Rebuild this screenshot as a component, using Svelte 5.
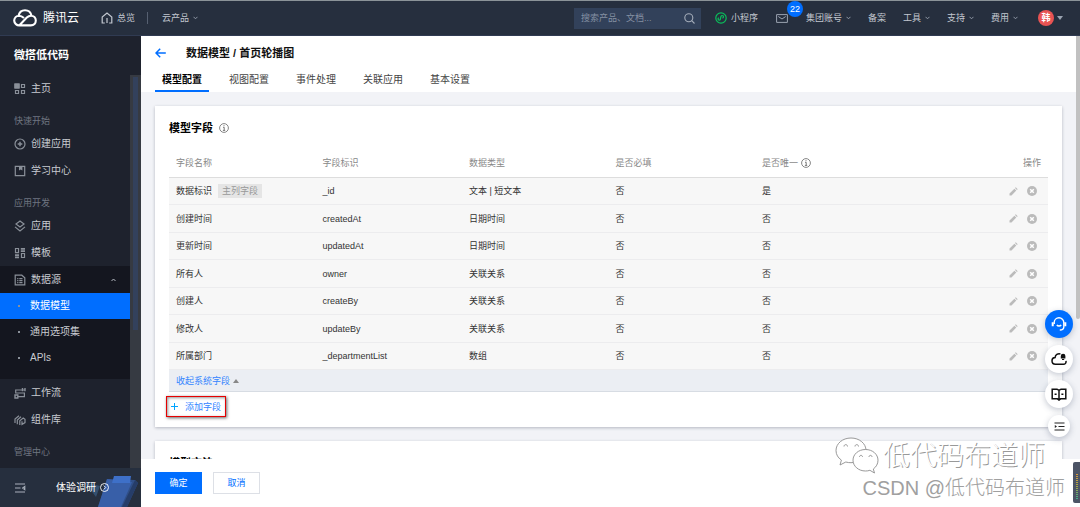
<script lang="ts">
    interface Field {
        name: string;
        key: string;
        type: string;
        required: string;
        unique: string;
        primary?: boolean;
    }

    const tabs = ['模型配置', '视图配置', '事件处理', '关联应用', '基本设置'];
    const submenu = ['数据模型', '通用选项集', 'APIs'];
    const links = [
        { label: '备案', menu: false },
        { label: '工具', menu: true },
        { label: '支持', menu: true },
        { label: '费用', menu: true }
    ];
    const fields: Field[] = [
        { name: '数据标识', key: '_id', type: '文本 | 短文本', required: '否', unique: '是', primary: true },
        { name: '创建时间', key: 'createdAt', type: '日期时间', required: '否', unique: '否' },
        { name: '更新时间', key: 'updatedAt', type: '日期时间', required: '否', unique: '否' },
        { name: '所有人', key: 'owner', type: '关联关系', required: '否', unique: '否' },
        { name: '创建人', key: 'createBy', type: '关联关系', required: '否', unique: '否' },
        { name: '修改人', key: 'updateBy', type: '关联关系', required: '否', unique: '否' },
        { name: '所属部门', key: '_departmentList', type: '数组', required: '否', unique: '否' }
    ];

    let activeTab = $state('模型配置');
    let activeItem = $state('数据模型');
    let open = $state(true);
    let keyword = $state('');
</script>

{#snippet caret()}
    <svg class="caret" width="5" height="4" viewBox="0 0 5 4"><path d="M.5 .8 2.5 2.8 4.5 .8" fill="none" stroke="currentColor" stroke-width=".9"/></svg>
{/snippet}

{#snippet info()}
    <svg width="10" height="10" viewBox="0 0 10 10" fill="none" stroke="currentColor"><circle cx="5" cy="5" r="4.4" stroke-width=".9"/><path d="M4 4.3h1.2v3M3.9 7.4h2.3M4.5 2.7h1"/></svg>
{/snippet}

{#snippet item(label: string, icon: string)}
    <a class="item" href="#{icon}">
        <svg width="12" height="12" viewBox="0 0 12 12" fill="none" stroke="currentColor" stroke-width="1.2">
            {#if icon === 'home'}
                <path d="M1 1h4v4H1zM7.5 7.5h3v3h-3zM1.5 7.5h3v3h-3zM7.5 1.5h3v3h-3z"/><path d="M1 1h4v4H1z" fill="currentColor"/>
            {:else if icon === 'create'}
                <circle cx="6" cy="6" r="5"/><path d="M6 3.7v4.6M3.7 6h4.6" stroke-width="1.5"/>
            {:else if icon === 'learn'}
                <path d="M1.3 1.3h9.4v9.4H1.3z"/><path d="M5 1.5h3.4v4L6.7 4.4 5 5.5z" fill="currentColor" stroke="none"/>
            {:else if icon === 'apps'}
                <path d="M6 .9 10 3.9 6 6.9 2 3.9zM1 6.9l5 4 5-4"/>
            {:else if icon === 'template'}
                <path d="M1.5 1.5h3v4.2h-3zM7.5 6.5h3v4h-3z"/><path d="M6.8 1.9H11M6.8 4.1H11M1 8.2h4M1 10.4h4" stroke-width="1.7"/>
            {:else if icon === 'flow'}
                <path d="M11 3H1.7v3h8.7v3.6H4"/><path d="M8.5 1v3.2M11 1v3.2M1 8h2.8v3H1z" stroke-width="1.4"/>
            {:else if icon === 'parts'}
                <path d="M1 9V5l4-3.2M3.3 10.3V6L7 2.8M5.8 11V6.7L9.2 4 11 5.4v3.2L8 10.5V7.3"/>
            {:else}
                <path d="M6 1.2 10.5 3v3.4L6 10.8 1.5 6.4V3z"/>
            {/if}
        </svg>
        <span>{label}</span>
    </a>
{/snippet}

<div class="app">
    <header class="topbar">
        <a class="brand" href="#top">
            <svg width="24" height="18" viewBox="0 0 24 18" fill="none" stroke="#fff" stroke-width="2.1" stroke-linejoin="round"><path d="M6.6 16.4A5 5 0 0 1 1.2 11.6 5 5 0 0 1 6 6.7c2 0 3.3.8 5 2.4M5.6 6.8C6.2 3.3 8.6 1.2 12 1.2c3.3 0 5.8 2.1 6.4 5.2M6.2 16.4h11.6c3.2 0 5-2.2 5-4.8 0-2.8-2.1-4.9-4.8-4.9-1.6 0-2.9.6-4.2 1.9L6.2 16.4"/></svg>
            <span>腾讯云</span>
        </a>
        <a class="nav overview" href="#overview">
            <svg width="12" height="12" viewBox="0 0 12 12" fill="none" stroke="currentColor" stroke-width="1.2"><path d="M3.8 11H1.2V5L6 1l4.8 4v6H8.2M6 6v5"/></svg>
            总览
        </a>
        <i class="divider"></i>
        <a class="nav" href="#products">云产品 {@render caret()}</a>
        <div class="tools">
            <label class="search">
                <input type="text" placeholder="搜索产品、文档..." aria-label="搜索" bind:value={keyword}/>
                <svg width="11" height="11" viewBox="0 0 11 11" fill="none" stroke="#a5adba" stroke-width="1.1"><circle cx="4.8" cy="4.8" r="4"/><path d="m7.7 7.7 2.8 2.8"/></svg>
            </label>
            <a class="nav mini" href="#mini">
                <svg width="12" height="12" viewBox="0 0 12 12" fill="none" stroke="#0abf5b" stroke-width="1.2"><circle cx="6" cy="6" r="5.2"/><path d="M3.9 6.2a1.2 1.2 0 1 0 1.7 1.5V4.4a1.3 1.3 0 1 1 1.8 1.4" transform="rotate(12 6 6)"/></svg>
                小程序
            </a>
            <a class="mail" href="#mail" aria-label="消息">
                <svg width="12" height="9" viewBox="0 0 12 9" fill="none" stroke="currentColor"><path d="M.6.6h10.8v7.8H.6zM2.3 2.5 6 5l3.7-2.5"/></svg>
                <span class="badge">22</span>
            </a>
            <a class="nav account" href="#account">集团账号 {@render caret()}</a>
            {#each links as link}
                <a class="nav link" href="#{link.label}">{link.label}{#if link.menu}{@render caret()}{/if}</a>
            {/each}
            <button class="user"><span class="avatar">韩</span><i class="down"></i></button>
        </div>
    </header>

    <div class="body">
        <aside class="sidebar">
            <h1>微搭低代码</h1>
            <div class="menu">
                <nav>
                    {@render item('主页', 'home')}
                    <p>快速开始</p>
                    {@render item('创建应用', 'create')}
                    {@render item('学习中心', 'learn')}
                    <p>应用开发</p>
                    {@render item('应用', 'apps')}
                    {@render item('模板', 'template')}
                    <div class="group">
                        <button class="item" onclick={() => {open = !open;}}>
                            <svg width="12" height="12" viewBox="0 0 12 12" fill="none" stroke="currentColor" stroke-width="1.2"><path d="M1.2 1.2h6.6l3 2.6v7H1.2zM3.2 4.7h1.2M5.3 4.7h3.2M3.2 6.7h1.2M5.3 6.7h3.2M3.2 8.7h1.2M5.3 8.7h3.2"/></svg>
                            <span>数据源</span>
                            <svg class="up" width="5" height="4" viewBox="0 0 5 4"><path d="M.5 3 2.5 1 4.5 3" fill="none" stroke="currentColor"/></svg>
                        </button>
                        {#if open}
                            {#each submenu as label}
                                <a class={activeItem === label ? "sub active" : "sub"} href="#{label}" onclick={() => {activeItem = label;}}><i></i>{label}</a>
                            {/each}
                        {/if}
                    </div>
                    {@render item('工作流', 'flow')}
                    {@render item('组件库', 'parts')}
                    <p>管理中心</p>
                    {@render item('权限管理', 'auth')}
                </nav>
                <div class="track"><i></i></div>
            </div>
            <div class="survey">
                <svg class="art" width="58" height="38" viewBox="0 0 58 38">
                    <path d="M2 13 19 17 15 28 9 20z" fill="#34506f"/>
                    <path d="M26 10 54 11 57 14 46 38H17z" fill="#304f88"/>
                    <path d="M26 10 51 13 40 38H17z" fill="#385fa8"/>
                    <path d="M33 7h17l-1 7H31z" fill="#3e70c8"/>
                    <path d="M54 11 57 14 46 38h-5z" fill="#263d69"/>
                </svg>
                <svg width="12" height="10" viewBox="0 0 12 10" fill="none" stroke="#a9b0bb" stroke-width="1.1"><path d="M1 1h10M1 5h5.5M1 9h10M10.8 3.4 8.6 5l2.2 1.6z"/></svg>
                <a href="#survey">体验调研
                    <svg width="9" height="9" viewBox="0 0 9 9" fill="none" stroke="currentColor" stroke-width=".9"><circle cx="4.5" cy="4.5" r="4"/><path d="M3.8 2.6 5.7 4.5 3.8 6.4"/></svg>
                </a>
            </div>
        </aside>

        <main>
            <div class="head">
                <div class="title">
                    <a href="#back" aria-label="返回"><svg width="11" height="10" viewBox="0 0 11 10" fill="none" stroke="#006eff" stroke-width="1.5"><path d="M5.2.7 1 5l4.2 4.3M1 5h9.8"/></svg></a>
                    <h2>数据模型 / 首页轮播图</h2>
                </div>
                <div class="tabs">
                    {#each tabs as tab}
                        <button class={activeTab === tab ? "active" : ""} onclick={() => {activeTab = tab;}}>{tab}</button>
                    {/each}
                </div>
            </div>

            <div class="content">
                <section class="card">
                    <h3>模型字段 {@render info()}</h3>
                    <table>
                        <thead>
                            <tr>
                                <th>字段名称</th>
                                <th>字段标识</th>
                                <th>数据类型</th>
                                <th>是否必填</th>
                                <th><span class="with-icon">是否唯一 {@render info()}</span></th>
                                <th>操作</th>
                            </tr>
                        </thead>
                        <tbody>
                            {#each fields as field}
                                <tr>
                                    <td>{field.name}{#if field.primary}<span class="tag">主列字段</span>{/if}</td>
                                    <td>{field.key}</td>
                                    <td>{field.type}</td>
                                    <td>{field.required}</td>
                                    <td>{field.unique}</td>
                                    <td>
                                        <div class="actions">
                                            <button disabled aria-label="编辑"><svg width="9" height="9" viewBox="0 0 9 9" fill="#bbb"><path d="M.5 8.5v-2L5.4 1.7l1.9 1.9-4.8 4.9zM6 1.1 6.8.3 8.7 2.2 7.9 3z"/></svg></button>
                                            <button disabled aria-label="删除"><svg width="10" height="10" viewBox="0 0 10 10"><circle cx="5" cy="5" r="5" fill="#bbb"/><path d="m3.2 3.2 3.6 3.6M6.8 3.2 3.2 6.8" stroke="#fff" stroke-width="1.5"/></svg></button>
                                        </div>
                                    </td>
                                </tr>
                            {/each}
                        </tbody>
                    </table>
                    <button class="collapse">收起系统字段 <i></i></button>
                    <button class="add">
                        <svg width="7" height="7" viewBox="0 0 7 7" stroke="#00a4ff"><path d="M3.5 0v7M0 3.5h7"/></svg>
                        添加字段
                    </button>
                </section>
                <section class="card">
                    <h3>模型方法</h3>
                </section>
            </div>

            <div class="footer">
                <button class="primary">确定</button>
                <button>取消</button>
            </div>
            <div class="scrollbar"><i></i></div>
        </main>
    </div>

    <div class="floats">
        <button class="service" aria-label="客服"><svg width="16" height="16" viewBox="0 0 16 16" fill="none" stroke="#fff" stroke-width="1.4"><path d="M3.2 8V6.6a4.8 4.8 0 0 1 9.6 0V11c0 1.8-1.6 3-4 3M5.8 9c1.1 1.3 3.3 1.3 4.4 0"/><path d="M1.7 6.3v4M14.3 6.3v4" stroke-width="2"/></svg></button>
        <button aria-label="云助手"><svg width="16" height="14" viewBox="0 0 16 14" fill="none" stroke="#111" stroke-width="1.5"><path d="M9.4 2C6.8 1.3 4.3 2.8 4.1 5.5 2 5.6 1 7.2 1 8.8c0 2 1.3 3.5 3.4 3.5h7.9c2 0 3-1.4 2.7-3.4"/><path d="M9.8 6.5V4a2.3 2.3 0 0 1 4.6 0v2.5z" fill="#111" stroke="none"/><path d="M11 7.5h2.2" stroke-width="1"/></svg></button>
        <button aria-label="文档"><svg width="16" height="13" viewBox="0 0 16 13" fill="none" stroke="#111" stroke-width="1.5"><path d="M1.2 1.2H6L8 2.4l2-1.2h4.8v9.6H9.6L8 12l-1.6-1.2H1.2zM8 2.4V12M3.6 6.2h2M10.4 6.2h2"/></svg></button>
        <button class="small" aria-label="收起"><svg width="11" height="9" viewBox="0 0 11 9" fill="none" stroke="#222" stroke-width="1.2"><path d="M.5 1h10M4.5 4.5h6M.5 8h10"/><path d="M.8 3v3l2.2-1.5z" fill="#222" stroke="none"/></svg></button>
    </div>

    <div class="meter"><i></i></div>

    <div class="watermark">
        <div class="account-name">
            <svg width="44" height="38" viewBox="0 0 44 38" fill="#fff" stroke="#8d8d8d" stroke-width=".9">
                <path d="M16 1C7.6 1 1 6.500 1 13.500c0 4 2 7.300 5.400 9.600L5 28l5.800-3c1.700.5 3.400.7 5.200.7 8.300 0 15-5.600 15-12.300C31 6.500 24.300 1 16 1z"/>
                <path d="M30.500 12.500C23.400 12.500 18 17.300 18 23.200S23.400 34 30.500 34c1.500 0 3-.2 4.400-.7l4.600 2.700-1.200-4c2.900-2 4.700-5.200 4.700-8.800 0-5.900-5.400-10.700-12.500-10.700z"/>
                <path d="M9 9.500c0-2.500 3.500-2.500 3.500 0M20 9.500c0-2.500 3.500-2.500 3.500 0M24.500 20c0-2.200 3-2.200 3 0M34 20c0-2.200 3-2.200 3 0" fill="none"/>
            </svg>
            低代码布道师
        </div>
        <div class="csdn">CSDN @低代码布道师</div>
    </div>
</div>

<style>
    :global(body) {
        margin: 0;
    }
    .app {
        position: relative;
        display: flex;
        flex-direction: column;
        height: 100vh;
        overflow: hidden;
        font-family: "Liberation Sans", "Noto Sans CJK SC", sans-serif;
        font-size: 9px;
        line-height: 14px;
        color: #222;
    }
    .app * {
        box-sizing: border-box;
    }
    svg {
        display: block;
        flex: none;
    }
    a {
        color: inherit;
        text-decoration: none;
    }
    button, input {
        font: inherit;
        color: inherit;
        background: none;
        border: 0;
        padding: 0;
    }
    h1, h2, h3, p {
        margin: 0;
    }

    .topbar {
        display: flex;
        align-items: center;
        flex: none;
        height: 36px;
        padding: 0 17px 0 13px;
        background: #262f3e;
        border-top: 1px solid #8b9398;
        border-bottom: 1px solid #303b52;
        color: #c3c8d0;
    }
    .brand {
        display: flex;
        align-items: center;
        gap: 6px;
        margin-right: 22px;
        font-size: 12px;
        color: #fff;
    }
    .nav {
        display: flex;
        align-items: center;
        white-space: nowrap;
    }
    .overview {
        gap: 4px;
    }
    .caret {
        margin-left: 4px;
        color: #9aa3b0;
    }
    .divider {
        width: 1px;
        height: 12px;
        margin: 0 14px 0 12px;
        background: #566071;
    }
    .tools {
        display: flex;
        align-items: center;
        margin-left: auto;
    }
    .search {
        display: flex;
        align-items: center;
        width: 127px;
        height: 21px;
        padding: 0 6px 0 7px;
        background: #32415a;
    }
    .search input {
        flex: 1;
        min-width: 0;
        outline: 0;
    }
    .search input::placeholder {
        color: #8490a2;
        opacity: 1;
    }
    .mini {
        gap: 4px;
        margin-left: 14px;
    }
    .mail {
        position: relative;
        margin-left: 18px;
        color: #9aa3b0;
    }
    .badge {
        position: absolute;
        top: -13px;
        left: 11px;
        width: 16px;
        height: 16px;
        border-radius: 8px;
        background: #006eff;
        color: #fff;
        line-height: 16px;
        text-align: center;
    }
    .account {
        margin-left: 18px;
    }
    .link {
        margin-left: 17px;
    }
    .user {
        display: flex;
        align-items: center;
        gap: 3px;
        margin-left: 20px;
    }
    .avatar {
        width: 16px;
        height: 16px;
        border-radius: 8px;
        background: #e85353;
        color: #fff;
        font-weight: 700;
        line-height: 16px;
    }
    .down {
        border: 3px solid transparent;
        border-top: 4px solid #9aa3b0;
        border-bottom: 0;
    }

    .body {
        display: flex;
        flex: 1;
        min-height: 0;
    }
    .sidebar {
        display: flex;
        flex-direction: column;
        flex: none;
        width: 141px;
        background: #1e222d;
        color: #c8cbd1;
        font-size: 10px;
    }
    .sidebar h1 {
        flex: none;
        height: 39px;
        padding-left: 14px;
        font-size: 11px;
        line-height: 39px;
        color: #fff;
    }
    .menu {
        display: flex;
        flex: 1;
        min-height: 0;
        overflow: hidden;
    }
    .menu nav {
        flex: 1;
    }
    .menu p {
        height: 28px;
        padding: 10px 0 0 14px;
        font-size: 9px;
        line-height: 18px;
        color: #6f7580;
    }
    .item {
        display: flex;
        align-items: center;
        gap: 5px;
        width: 100%;
        height: 27px;
        padding: 0 14px;
    }
    .item svg {
        color: #8a9099;
    }
    .item .up {
        margin-left: auto;
        color: #b5bac2;
    }
    .group {
        padding-bottom: 8px;
        background: #14161f;
    }
    .sub {
        display: flex;
        align-items: center;
        gap: 10px;
        height: 26px;
        padding-left: 18px;
    }
    .sub i {
        width: 2px;
        height: 2px;
        background: #8a9099;
    }
    .sub.active {
        background: #006eff;
        color: #fff;
    }
    .track {
        width: 11px;
        padding: 2px 3px;
        background: #363a42;
    }
    .track i {
        display: block;
        width: 5px;
        height: 65%;
        background: #33415c;
    }
    .survey {
        position: relative;
        display: flex;
        align-items: center;
        gap: 30px;
        flex: none;
        height: 39px;
        padding-left: 14px;
        background: #262f3e;
        color: #fff;
    }
    .survey a {
        position: relative;
        display: flex;
        align-items: center;
        gap: 4px;
    }
    .art {
        position: absolute;
        right: 2px;
        bottom: 0;
    }

    main {
        position: relative;
        display: flex;
        flex-direction: column;
        flex: 1;
        min-width: 0;
        background: #f2f3f7;
    }
    .head {
        padding: 8px 14px 0;
        background: #fff;
    }
    .title {
        display: flex;
        align-items: center;
        gap: 20px;
        height: 18px;
    }
    .title h2 {
        font-size: 11px;
        color: #111;
    }
    .tabs {
        display: flex;
        gap: 13px;
        padding-top: 8px;
    }
    .tabs button {
        height: 22px;
        padding: 0 7px;
        border-bottom: 2px solid transparent;
        font-size: 10px;
        color: #444;
    }
    .tabs button.active {
        border-color: #006eff;
        color: #000;
        font-weight: 700;
    }
    .content {
        flex: 1;
        min-height: 0;
        padding: 14px 18px 0 14px;
        overflow: hidden;
    }
    .card {
        margin-bottom: 14px;
        padding: 14px 14px 10px;
        background: #fff;
        box-shadow: 0 1px 3px rgba(54, 58, 80, 0.32);
    }
    .card h3 {
        display: flex;
        align-items: center;
        gap: 6px;
        height: 16px;
        font-size: 11px;
        color: #000;
    }
    .card h3 svg, .with-icon svg {
        color: #777;
    }
    table {
        width: 100%;
        margin-top: 12px;
        table-layout: fixed;
        border-collapse: separate;
        border-spacing: 0;
    }
    th, td {
        height: 27px;
        padding: 0 7px;
        text-align: left;
        white-space: nowrap;
    }
    th {
        height: 30px;
        border-bottom: 1px solid #ddd;
        font-weight: 400;
        color: #888;
    }
    th:last-child {
        text-align: right;
    }
    .with-icon {
        display: flex;
        align-items: center;
        gap: 3px;
    }
    td {
        background: #f7f7f7;
        border-bottom: 1px solid #ececee;
        color: #333;
    }
    tr:nth-child(even) td {
        height: 28px;
    }
    .tag {
        display: inline-block;
        margin-left: 6px;
        padding: 0 4px;
        background: #e5e5e5;
        color: #999;
    }
    .actions {
        display: flex;
        align-items: center;
        justify-content: flex-end;
        gap: 9px;
        padding-right: 4px;
    }
    .collapse {
        display: flex;
        align-items: center;
        gap: 3px;
        width: 100%;
        height: 22px;
        padding: 0 7px;
        background: #ebeef3;
        border-bottom: 1px solid #d7dce3;
        color: #3385ff;
    }
    .collapse i {
        border: 3px solid transparent;
        border-bottom: 4px solid #888;
        border-top: 0;
    }
    .add {
        display: flex;
        align-items: center;
        gap: 7px;
        height: 21px;
        margin: 4px 0 0 -3px;
        padding: 0 4px;
        border: 1px solid #e60000;
        box-shadow: 1px 1px 3px rgba(0, 0, 0, 0.6), inset 1px 1px 3px rgba(0, 0, 0, 0.4);
        color: #3385ff;
    }
    .footer {
        position: relative;
        display: flex;
        gap: 11px;
        flex: none;
        height: 48px;
        padding: 13px 14px;
        background: #fff;
    }
    .footer button {
        width: 47px;
        height: 22px;
        border: 1px solid #dde0e6;
        color: #006eff;
    }
    .footer .primary {
        border-color: #006eff;
        background: #006eff;
        color: #fff;
    }
    .scrollbar {
        position: absolute;
        top: 0;
        right: 0;
        width: 4px;
        height: 100%;
    }
    .scrollbar i {
        display: block;
        height: 60%;
        border-radius: 0 0 2px 2px;
        background: #c1c1c1;
    }

    .floats {
        position: absolute;
        right: 7px;
        bottom: 70px;
        display: flex;
        flex-direction: column;
        align-items: center;
        gap: 7px;
    }
    .floats button {
        display: flex;
        align-items: center;
        justify-content: center;
        width: 28px;
        height: 28px;
        border-radius: 14px;
        background: #fff;
        box-shadow: 0 2px 6px rgba(55, 70, 100, 0.3);
    }
    .floats .service {
        background: #006eff;
    }
    .floats .small {
        width: 22px;
        height: 22px;
    }
    .meter {
        position: absolute;
        right: 0;
        bottom: 4px;
        width: 7px;
        height: 41px;
        padding: 12px 2px 4px 3px;
        border-radius: 2px 0 0 2px;
        background: #4c5465;
    }
    .meter i {
        display: block;
        height: 100%;
        background: repeating-linear-gradient(transparent 0 1px, #4c5465 1px 2px), linear-gradient(#d99a3c, #a9a945, #3fb08a);
    }
    .watermark {
        position: absolute;
        right: 15px;
        bottom: 6px;
        display: flex;
        flex-direction: column;
        align-items: flex-end;
        color: #fff;
        pointer-events: none;
    }
    .account-name {
        display: flex;
        align-items: center;
        gap: 4px;
        padding-right: 20px;
        font-size: 27px;
        font-weight: 300;
        line-height: 36px;
        text-shadow: 1px 1px 0 #999;
    }
    .csdn {
        font-size: 20px;
        font-weight: 300;
        line-height: 26px;
        color: #a0a0a0;
        text-shadow: -1px -1px 0 #fff;
    }
</style>
